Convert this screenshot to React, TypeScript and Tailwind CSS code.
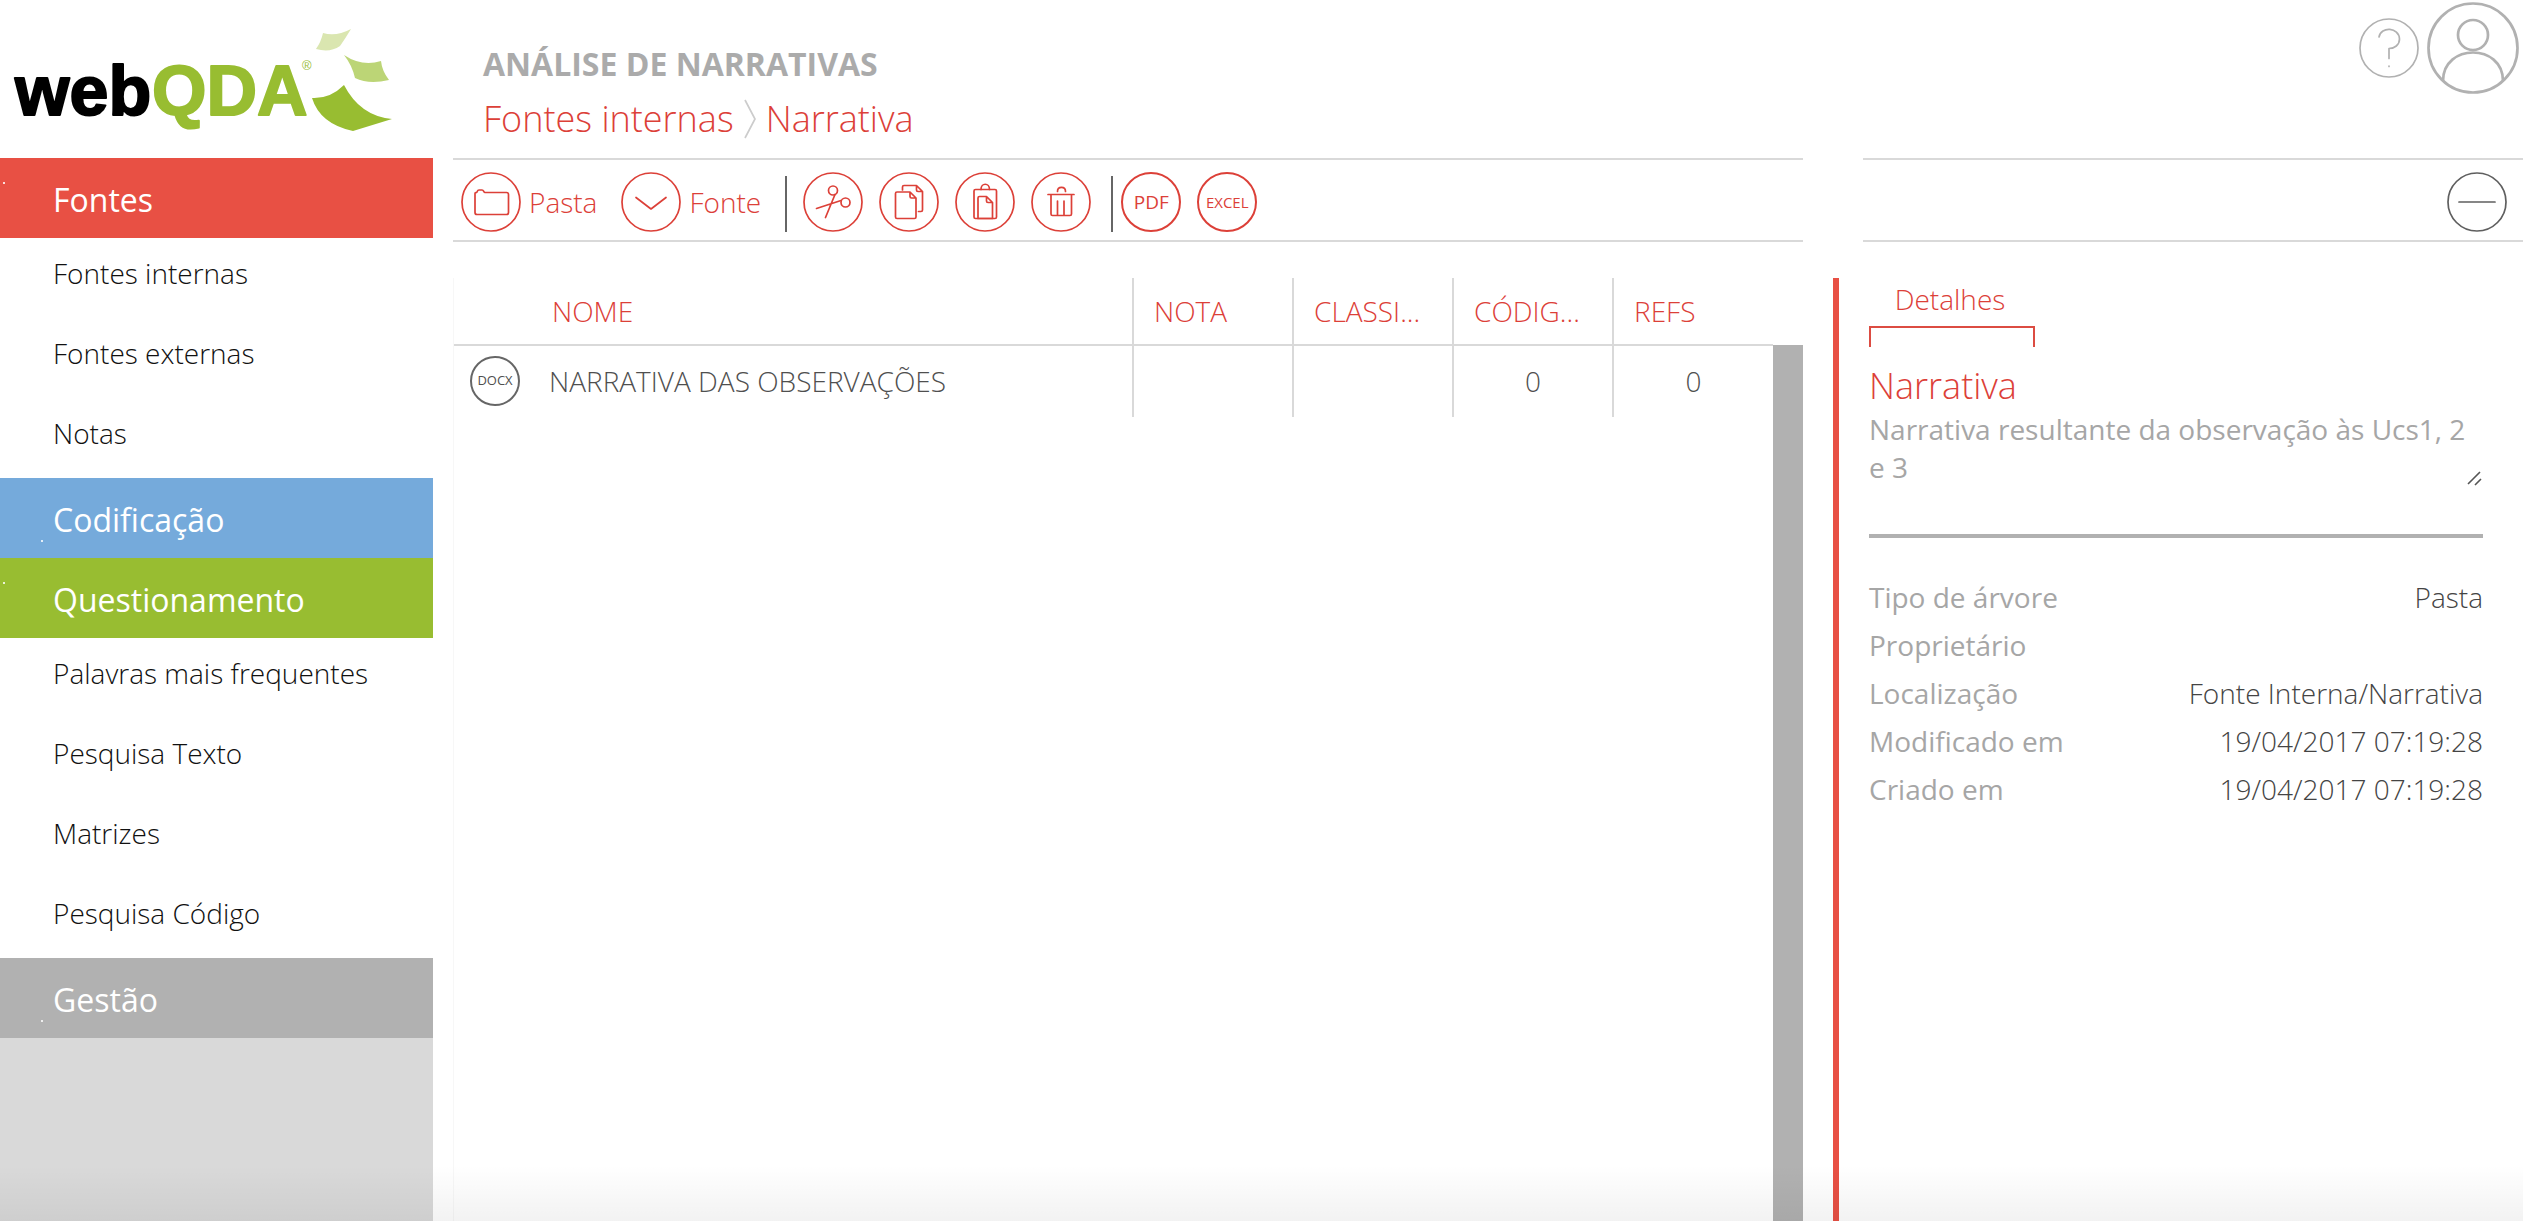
import type { ReactNode } from "react";

type Section = {
  title: string;
  color: string;
  dot: string;
  items: string[];
};

const SECTIONS: Section[] = [
  {
    title: "Fontes",
    color: "bg-[#e85044]",
    dot: "left-[3px] top-6",
    items: ["Fontes internas", "Fontes externas", "Notas"],
  },
  {
    title: "Codificação",
    color: "bg-[#75aadb]",
    dot: "left-[41px] bottom-4",
    items: [],
  },
  {
    title: "Questionamento",
    color: "bg-[#98bd31]",
    dot: "left-[3px] top-6",
    items: [
      "Palavras mais frequentes",
      "Pesquisa Texto",
      "Matrizes",
      "Pesquisa Código",
    ],
  },
  {
    title: "Gestão",
    color: "bg-[#b1b1b1]",
    dot: "left-[41px] bottom-4",
    items: [],
  },
];

const COLUMNS = ["NOTA", "CLASSI...", "CÓDIG...", "REFS"];

const SOURCES = [
  {
    type: "DOCX",
    name: "NARRATIVA DAS OBSERVAÇÕES",
    values: ["", "", "0", "0"],
  },
];

const DETAILS = [
  { label: "Tipo de árvore", value: "Pasta" },
  { label: "Proprietário", value: "" },
  { label: "Localização", value: "Fonte Interna/Narrativa" },
  { label: "Modificado em", value: "19/04/2017 07:19:28" },
  { label: "Criado em", value: "19/04/2017 07:19:28" },
];

function Logo() {
  return (
    <svg viewBox="0 0 400 140" className="h-[140px] w-[400px]">
      <g
        fontFamily="Liberation Sans, Arial, sans-serif"
        fontSize="70"
        fontWeight="700"
        strokeWidth="2"
        strokeLinejoin="round"
      >
        <text x="15" y="115" fill="#000" stroke="#000">
          web
        </text>
        <text x="152" y="115" fill="#98bd31" stroke="#98bd31">
          QDA
        </text>
      </g>
      <text
        x="302"
        y="70"
        fill="#98bd31"
        fontFamily="Liberation Sans, Arial, sans-serif"
        fontSize="13"
      >
        ®
      </text>
      <path
        d="M323 33 Q336 37 351 29 Q345 39 340 46 Q330 53 316 49 Q321 42 323 33Z"
        fill="#dae6b0"
      />
      <path
        d="M344 55 Q362 67 381 61 Q382 71 389 80 Q369 85 355 78 Q352 65 344 55Z"
        fill="#bcd576"
      />
      <path
        d="M312 98 Q330 99 344 85 Q360 116 392 119 L353 131 Q320 124 312 98Z"
        fill="#98bd31"
      />
    </svg>
  );
}

function Sidebar() {
  return (
    <aside className="flex w-[433px] shrink-0 flex-col">
      <a href="#" aria-label="webQDA" className="h-[158px]">
        <Logo />
      </a>
      <nav>
        {SECTIONS.map((section) => (
          <div key={section.title}>
            <a
              href="#"
              className={`relative flex h-20 items-center pl-[53px] pt-1 text-[32px] text-white ${section.color}`}
            >
              <span
                className={`absolute size-[2px] bg-white/80 ${section.dot}`}
              />
              {section.title}
            </a>
            {section.items.map((item) => (
              <a
                key={item}
                href="#"
                className="flex h-20 items-center pb-[10px] pl-[53px] text-[28px] font-light text-[#111]"
              >
                {item}
              </a>
            ))}
          </div>
        ))}
      </nav>
      <div className="flex-1 bg-[#d9d9d9]" />
    </aside>
  );
}

function Icon({ children }: { children: ReactNode }) {
  return (
    <svg
      viewBox="0 0 60 60"
      fill="none"
      stroke="currentColor"
      strokeWidth="1.7"
      strokeLinecap="round"
      strokeLinejoin="round"
      className="size-[60px] shrink-0"
    >
      <circle cx="30" cy="30" r="29" />
      {children}
    </svg>
  );
}

function TextButton({ label, size }: { label: string; size: string }) {
  return (
    <button
      className={`flex size-[60px] items-center justify-center rounded-full border-2 font-medium ${size}`}
    >
      {label}
    </button>
  );
}

function Separator() {
  return <div className="mt-1 h-14 w-[2px] bg-[#666]" />;
}

function Toolbar() {
  return (
    <div className="flex h-[84px] flex-1 items-center border-y-2 border-[#d9d9d9] pl-2 pt-1 text-[28px] font-light text-[#dc4038]">
      <button className="flex items-center gap-2">
        <Icon>
          <path d="M14 21.5V40.500a2 2 0 0 0 2 2h29.500a2 2 0 0 0 2-2V22.500a2 2 0 0 0-2-2H24c-1.500 0-1-2.500-3-2.500h-3c-2 0-1.500 2-2.500 2.500-1 .3-1.500 0-1.500 1Z" />
        </Icon>
        Pasta
      </button>
      <button className="ml-6 flex items-center gap-2">
        <Icon>
          <path d="M15 25.500 30 37l15-11.500" />
        </Icon>
        Fonte
      </button>
      <div className="ml-6 flex gap-4">
        <Separator />
        <div className="flex gap-4">
          <button aria-label="Cortar">
            <Icon>
              <circle cx="30" cy="18.500" r="4.500" />
              <circle cx="42.500" cy="30.500" r="4.500" />
              <path d="M13.500 36.500 38 28.500M22.500 45.500 32 22.500" />
            </Icon>
          </button>
          <button aria-label="Copiar">
            <Icon>
              <path d="M31 20H18a1.500 1.500 0 0 0-1.500 1.500V45a1.500 1.500 0 0 0 1.500 1.500h17.500A1.500 1.500 0 0 0 37 45V26Zm0 0v4.500A1.500 1.500 0 0 0 32.500 26H37" />
              <path d="M23.500 18v-3a1.500 1.500 0 0 1 1.500-1.500h12.500l6 6V38a1.500 1.500 0 0 1-1.500 1.500h-2.500M37.500 13.500V18a1.500 1.500 0 0 0 1.500 1.500h4.500" />
            </Icon>
          </button>
          <button aria-label="Colar">
            <Icon>
              <rect x="19" y="17.500" width="22.500" height="29" rx="1.500" />
              <path d="M26 17.500c0-7 8.500-7 8.500 0" />
              <path d="M31.500 24.500h-7A1.500 1.500 0 0 0 23 26v20.500h14.500v-16Zm0 0V29a1.500 1.500 0 0 0 1.500 1.500h4.500" />
            </Icon>
          </button>
          <button aria-label="Eliminar">
            <Icon>
              <path d="M17 22.500h26M20 22.500V42a1.500 1.500 0 0 0 1.500 1.500H39a1.500 1.500 0 0 0 1.500-1.500V22.500M26.500 29v14M33 29v14M26.500 19.500c0-5.500 8-5.500 8 0" />
            </Icon>
          </button>
        </div>
      </div>
      <div className="ml-5 flex gap-2">
        <Separator />
        <div className="flex gap-4">
          <TextButton label="PDF" size="text-[19px]" />
          <TextButton label="EXCEL" size="text-[15px]" />
        </div>
      </div>
    </div>
  );
}

function SourcesTable() {
  return (
    <section className="flex min-w-0 flex-1">
      <div className="min-w-0 flex-1 border-l border-[#f7f7f7]">
        <table className="w-full table-fixed text-[28px] font-light">
          <thead>
            <tr className="h-[67px] border-b-2 border-[#d9d9d9] text-[#dc4038]">
              <th className="pl-[98px] text-left font-light">NOME</th>
              {COLUMNS.map((column) => (
                <th
                  key={column}
                  className="w-40 whitespace-nowrap border-l-2 border-[#d9d9d9] pl-5 text-left font-light"
                >
                  {column}
                </th>
              ))}
            </tr>
          </thead>
          <tbody className="text-[#4f4f4f]">
            {SOURCES.map((source) => (
              <tr key={source.name} className="h-[72px]">
                <td className="pb-[2px]">
                  <div className="flex items-center gap-[29px] pl-4">
                    <span className="flex size-[50px] items-center justify-center rounded-full border-2 border-[#666] text-[13px] font-medium">
                      {source.type}
                    </span>
                    {source.name}
                  </div>
                </td>
                {source.values.map((value, i) => (
                  <td
                    key={COLUMNS[i]}
                    className="border-l-2 border-[#d9d9d9] pb-[2px] text-center"
                  >
                    {value}
                  </td>
                ))}
              </tr>
            ))}
          </tbody>
        </table>
      </div>
      <div className="mt-[67px] w-[30px] bg-[#b1b1b1]" />
    </section>
  );
}

function DetailsPanel() {
  return (
    <aside className="w-[690px] shrink-0 border-l-[6px] border-[#e85044] pl-[30px] pr-10 text-[28px] leading-[38px]">
      <button className="block w-[166px] pt-[2px] font-light text-[#dc4038]">
        <span className="block pr-1">Detalhes</span>
        <span className="mt-2 block h-[21px] border-x-2 border-t-2 border-[#dc4c42]" />
      </button>
      <h2 className="mt-[15px] text-[36px] font-light leading-[48px] text-[#dc4038]">
        Narrativa
      </h2>
      <div className="relative h-[124px]">
        <textarea
          aria-label="Descrição"
          rows={2}
          className="block w-full resize-none overflow-hidden text-[#a6a6a6] outline-none"
          defaultValue="Narrativa resultante da observação às Ucs1, 2 e 3"
        />
        <svg
          viewBox="0 0 16 16"
          className="absolute right-0 top-[60px] size-4"
          stroke="#555"
          strokeWidth="1.600"
        >
          <path d="M1 14 13 2M8 15l6-6" />
        </svg>
      </div>
      <div className="h-1 bg-[#b1b1b1]" />
      <dl className="mt-[35px]">
        {DETAILS.map((detail) => (
          <div key={detail.label} className="flex h-12 items-center justify-between">
            <dt className="text-[#a6a6a6]">{detail.label}</dt>
            <dd className="font-light text-[#444]">{detail.value}</dd>
          </div>
        ))}
      </dl>
    </aside>
  );
}

export default function App() {
  return (
    <div className="relative flex h-screen overflow-hidden bg-white font-['Open_Sans',sans-serif]">
      <Sidebar />
      <div className="flex min-w-0 flex-1 flex-col pl-5">
        <header className="flex h-[158px] justify-between">
          <div className="pl-[30px] pt-[42px]">
            <h1 className="text-[32px] font-bold leading-[44px] text-[#ababab]">
              ANÁLISE DE NARRATIVAS
            </h1>
            <div className="mt-2 flex items-center text-[36px] font-light leading-[50px] text-[#dc4038]">
              <a href="#">Fontes internas</a>
              <svg
                viewBox="0 0 12 40"
                className="mx-[10px] h-10 w-3"
                fill="none"
                stroke="#ccc"
                strokeWidth="1.700"
              >
                <path d="M1 1l10 19L1 39" />
              </svg>
              <a href="#">Narrativa</a>
            </div>
          </div>
          <div className="flex items-start gap-2 pr-1 pt-[2px] text-[#b1b1b1]">
            <button aria-label="Ajuda" className="mt-4">
              <Icon>
                <path d="M20 19c2-11 20-10 20.500 2 0 6-5 9.500-10.500 9.500V40.500M30 48v.5" />
              </Icon>
            </button>
            <button aria-label="Perfil">
              <svg
                viewBox="0 0 92 92"
                className="size-[92px]"
                fill="none"
                stroke="currentColor"
                strokeWidth="2.700"
              >
                <circle cx="46" cy="46" r="44.500" />
                <circle cx="46" cy="33" r="15" />
                <path d="M16 79c0-38 60-38 60 0" />
              </svg>
            </button>
          </div>
        </header>
        <div className="flex gap-[60px]">
          <Toolbar />
          <div className="flex h-[84px] w-[660px] items-center justify-end border-y-2 border-[#d9d9d9] pr-4 pt-1 text-[#5f5f5f]">
            <button aria-label="Minimizar">
              <Icon>
                <path d="M12 30h36" />
              </Icon>
            </button>
          </div>
        </div>
        <main className="mt-9 flex flex-1 gap-[30px]">
          <SourcesTable />
          <DetailsPanel />
        </main>
      </div>
      <div className="pointer-events-none absolute inset-x-0 bottom-0 h-14 bg-linear-to-t from-black/5 to-transparent" />
    </div>
  );
}
